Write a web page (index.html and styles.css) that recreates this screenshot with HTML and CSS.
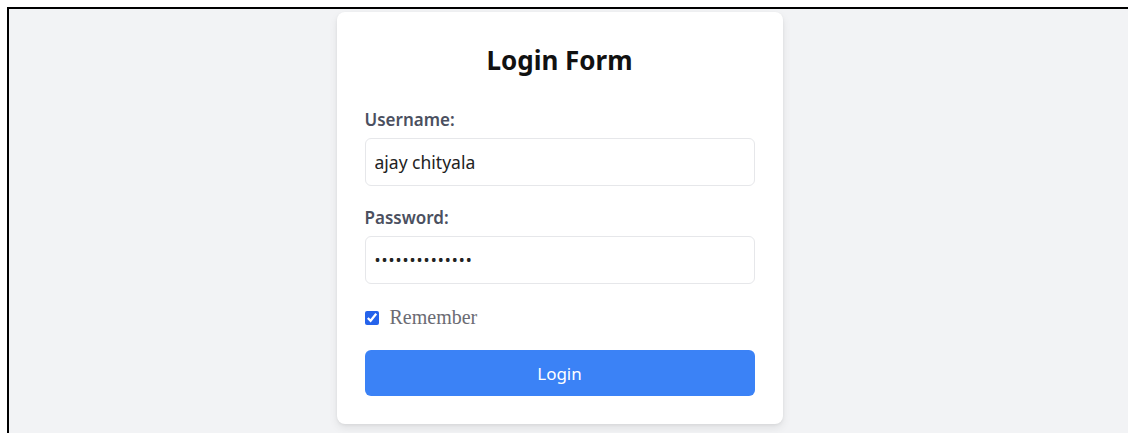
FILE: index.html
```html
<!DOCTYPE html>
<html lang="en">
<head>
<meta charset="utf-8">
<title>Login Form</title>
<link rel="stylesheet" href="styles.css">
</head>
<body>
<div class="frame">
  <main class="page">
    <form class="card" onsubmit="return false">
      <h1 class="title">Login Form</h1>
      <div class="field">
        <label class="label" for="username">Username:</label>
        <input class="input" id="username" type="text" value="ajay chityala">
      </div>
      <div class="field">
        <label class="label" for="password">Password:</label>
        <input class="input input-password" id="password" type="password" value="ajaychityala12">
      </div>
      <label class="remember">
        <input class="check" type="checkbox" checked>
        <span>Remember</span>
      </label>
      <button class="btn" type="submit">Login</button>
    </form>
  </main>
</div>
</body>
</html>
```
FILE: styles.css
```css
* {
  box-sizing: border-box;
}

html, body {
  margin: 0;
  height: 100%;
  overflow: hidden;
  background: #ffffff;
}

.frame {
  height: 100%;
  padding: 7px 0 0 7px;
}

.page {
  height: 100%;
  border-top: 2px solid #000;
  border-left: 2px solid #000;
  background: #f2f3f5;
  padding: 3px 18px 0 0;
  display: flex;
  justify-content: center;
  align-items: flex-start;
  font-family: "Noto Sans", "Open Sans", sans-serif;
}

.card {
  width: 446px;
  background: #fff;
  border-radius: 8px;
  box-shadow: 0 4px 8px rgba(0, 0, 0, 0.08), 0 1px 3px rgba(0, 0, 0, 0.06);
  padding: 28px 28px 28px;
  display: flex;
  flex-direction: column;
}

.title {
  margin: 0 0 30px;
  text-align: center;
  font-size: 26px;
  font-weight: 700;
  color: #111;
  line-height: 40px;
}

.field {
  display: flex;
  flex-direction: column;
  margin-bottom: 22px;
}

.label {
  font-size: 17px;
  font-weight: 600;
  color: #4b5060;
  line-height: 20px;
  margin-bottom: 8px;
}

.input {
  height: 48px;
  border: 1px solid #e6e7ea;
  border-radius: 6px;
  padding: 0 9px;
  font-family: inherit;
  font-size: 17.5px;
  color: #222;
  outline: none;
}

.input-password {
  letter-spacing: 1px;
  font-size: 16px;
}

.remember {
  display: flex;
  align-items: center;
  gap: 11px;
  margin: 0 0 21px;
  height: 23px;
  font-family: "Liberation Serif", serif;
  font-size: 20px;
  color: #6b6b73;
}

.check {
  margin: 0;
  width: 14px;
  height: 14px;
  accent-color: #2563eb;
}

.btn {
  height: 46px;
  border: none;
  border-radius: 6px;
  background: #3b82f6;
  color: #fff;
  font-family: inherit;
  font-size: 17px;
}
```
